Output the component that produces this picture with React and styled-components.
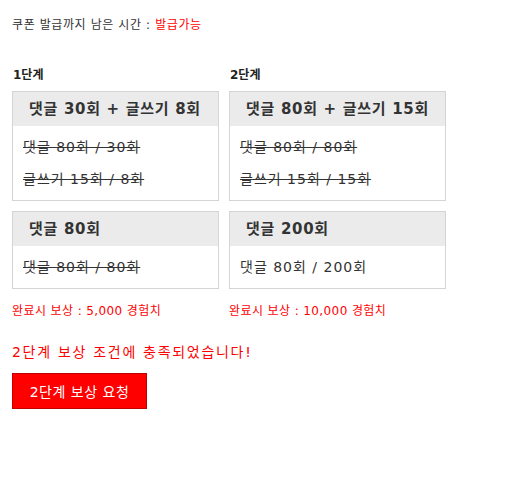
import React from "react";
import styled, { createGlobalStyle } from "styled-components";

const GlobalStyle = createGlobalStyle`
  body {
    margin: 0;
    background: #fff;
    font-family: "DejaVu Sans", "Noto Sans CJK KR", sans-serif;
    color: #333;
  }
`;

const steps = [
  {
    label: "1단계",
    width: 207,
    reward: "완료시 보상 : 5,000 경험치",
    cards: [
      {
        title: "댓글 30회 + 글쓰기 8회",
        rows: [
          { text: "댓글 80회 / 30회", done: true },
          { text: "글쓰기 15회 / 8회", done: true },
        ],
      },
      {
        title: "댓글 80회",
        rows: [{ text: "댓글 80회 / 80회", done: true }],
      },
    ],
  },
  {
    label: "2단계",
    width: 217,
    reward: "완료시 보상 : 10,000 경험치",
    cards: [
      {
        title: "댓글 80회 + 글쓰기 15회",
        rows: [
          { text: "댓글 80회 / 80회", done: true },
          { text: "글쓰기 15회 / 15회", done: true },
        ],
      },
      {
        title: "댓글 200회",
        rows: [{ text: "댓글 80회 / 200회", done: false }],
      },
    ],
  },
];

const App = () => {
  return (
    <>
      <GlobalStyle />
      <Page>
        <Timer>
          쿠폰 발급까지 남은 시간 : <Red>발급가능</Red>
        </Timer>
        <Steps>
          {steps.map((step) => (
            <Step key={step.label} $width={step.width}>
              <StepLabel>{step.label}</StepLabel>
              {step.cards.map((card) => (
                <Card key={card.title}>
                  <CardTitle>{card.title}</CardTitle>
                  <CardBody>
                    {card.rows.map((row) => (
                      <Row key={row.text} $done={row.done}>
                        {row.text}
                      </Row>
                    ))}
                  </CardBody>
                </Card>
              ))}
              <Reward>{step.reward}</Reward>
            </Step>
          ))}
        </Steps>
        <Notice>2단계 보상 조건에 충족되었습니다!</Notice>
        <RequestButton>2단계 보상 요청</RequestButton>
      </Page>
    </>
  );
};

export default App;

const Page = styled.div`
  padding: 16px 12px;
`;

const Timer = styled.p`
  margin: 0;
  font-size: 12px;
  line-height: 18px;
  color: #333;
  letter-spacing: 0.6px;
`;

const Red = styled.span`
  color: #ff0000;
`;

const Steps = styled.div`
  display: flex;
  gap: 10px;
  margin-top: 32px;
`;

const Step = styled.div`
  width: ${(p) => p.$width}px;
  display: flex;
  flex-direction: column;
`;

const StepLabel = styled.h4`
  margin: 0 0 0 1px;
  font-size: 12px;
  line-height: 18px;
  font-weight: bold;
  color: #222;
`;

const Card = styled.div`
  border: 1px solid #d4d4d4;
  margin-top: 10px;
  &:first-of-type {
    margin-top: 7px;
  }
`;

const CardTitle = styled.div`
  background: #ebebeb;
  padding: 0 16px;
  height: 34px;
  line-height: 34px;
  font-size: 15px;
  font-weight: bold;
  color: #333;
  letter-spacing: 0.7px;
  white-space: nowrap;
`;

const CardBody = styled.div`
  padding: 5px 10px;
`;

const Row = styled.div`
  font-size: 14px;
  line-height: 32px;
  color: #333;
  letter-spacing: 1px;
  text-decoration: ${(p) => (p.$done ? "line-through" : "none")};
  white-space: nowrap;
`;

const Reward = styled.p`
  margin: 13px 0 0;
  font-size: 12px;
  line-height: 18px;
  color: #ff0000;
  letter-spacing: 0.4px;
`;

const Notice = styled.p`
  margin: 22px 0 0;
  font-size: 14px;
  line-height: 20px;
  color: #ff0000;
  letter-spacing: 1.7px;
`;

const RequestButton = styled.button`
  margin-top: 11px;
  width: 135px;
  height: 36px;
  background: #ff0000;
  border: 1px solid #c00000;
  color: #fff;
  font-family: inherit;
  font-size: 14px;
  letter-spacing: 0.5px;
  cursor: pointer;
`;
